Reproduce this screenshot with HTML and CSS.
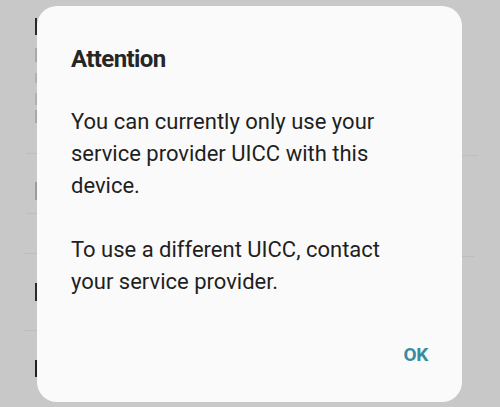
FILE: index.html
```html
<!DOCTYPE html>
<html>
<head>
<meta charset="utf-8">
<link rel="stylesheet" href="styles.css">
</head>
<body>
<div class="screen">
  <div class="backdrop">
    <span class="mark m1"></span>
    <span class="mark f1"></span>
    <span class="mark f2"></span>
    <span class="mark f3"></span>
    <span class="mark f4"></span>
    <span class="mark m2"></span>
    <span class="mark m3"></span>
    <span class="mark m4"></span>
    <span class="rule r1"></span>
    <span class="rule r2"></span>
    <span class="rule r3"></span>
    <span class="rule r4"></span>
    <span class="rule r5"></span>
    <span class="rule r6"></span>
  </div>
  <div class="dialog">
    <h1 class="title">Attention</h1>
    <p class="msg">You can currently only use your service provider UICC with this device.</p>
    <p class="msg">To use a different UICC, contact your service provider.</p>
    <div class="actions"><button class="ok">OK</button></div>
  </div>
</div>
</body>
</html>
```

FILE: styles.css
```css
html, body {
  margin: 0;
  padding: 0;
}
body {
  background: #c8c8c8;
  font-family: Roboto, "Noto Sans", sans-serif;
}
.screen {
  position: relative;
  width: 500px;
  height: 407px;
  overflow: hidden;
  padding-top: 6px;
  box-sizing: border-box;
}
.backdrop {
  position: absolute;
  inset: 0;
}
.mark {
  position: absolute;
  left: 35px;
  width: 2px;
  background: #555;
}
.m1 { top: 18px; height: 17px; background: #2a2a2a; }
.f1 { top: 48px; height: 14px; background: #a8a8a8; }
.f2 { top: 73px; height: 10px; background: #b0b0b0; }
.f3 { top: 93px; height: 12px; background: #b0b0b0; }
.f4 { top: 110px; height: 13px; background: #a8a8a8; }
.m2 { top: 182px; height: 18px; background: #9c9c9c; }
.m3 { top: 283px; height: 18px; background: #2a2a2a; }
.m4 { top: 360px; height: 17px; background: #222; }
.rule {
  position: absolute;
  height: 1px;
  background: #bdbdbd;
}
.r1 { left: 26px; width: 11px; top: 153px; }
.r2 { left: 26px; width: 11px; top: 213px; }
.r3 { left: 24px; width: 13px; top: 253px; }
.r4 { left: 24px; width: 13px; top: 330px; }
.r5 { left: 462px; width: 16px; top: 155px; }
.r6 { left: 462px; width: 12px; top: 256px; }
.dialog {
  position: relative;
  margin-left: 37px;
  width: 425px;
  height: 396px;
  box-sizing: border-box;
  background: #fafafa;
  border-radius: 20px;
  padding: 39px 34px 0 34px;
  color: #1f1f1f;
}
.title {
  margin: 0;
  font-size: 24px;
  line-height: 28px;
  font-weight: 700;
  letter-spacing: -0.6px;
  color: #262626;
}
.msg {
  margin: 33px 0 0 0;
  max-width: 330px;
  font-size: 22px;
  line-height: 32px;
  font-weight: 400;
}
.msg + .msg {
  margin-top: 32px;
}
.actions {
  display: flex;
  justify-content: flex-end;
  margin-top: 45px;
}
.ok {
  border: 0;
  background: none;
  padding: 0;
  font-family: Roboto, sans-serif;
  font-size: 19px;
  line-height: 24px;
  font-weight: 700;
  letter-spacing: -0.3px;
  color: #3a8aa0;
}
```
